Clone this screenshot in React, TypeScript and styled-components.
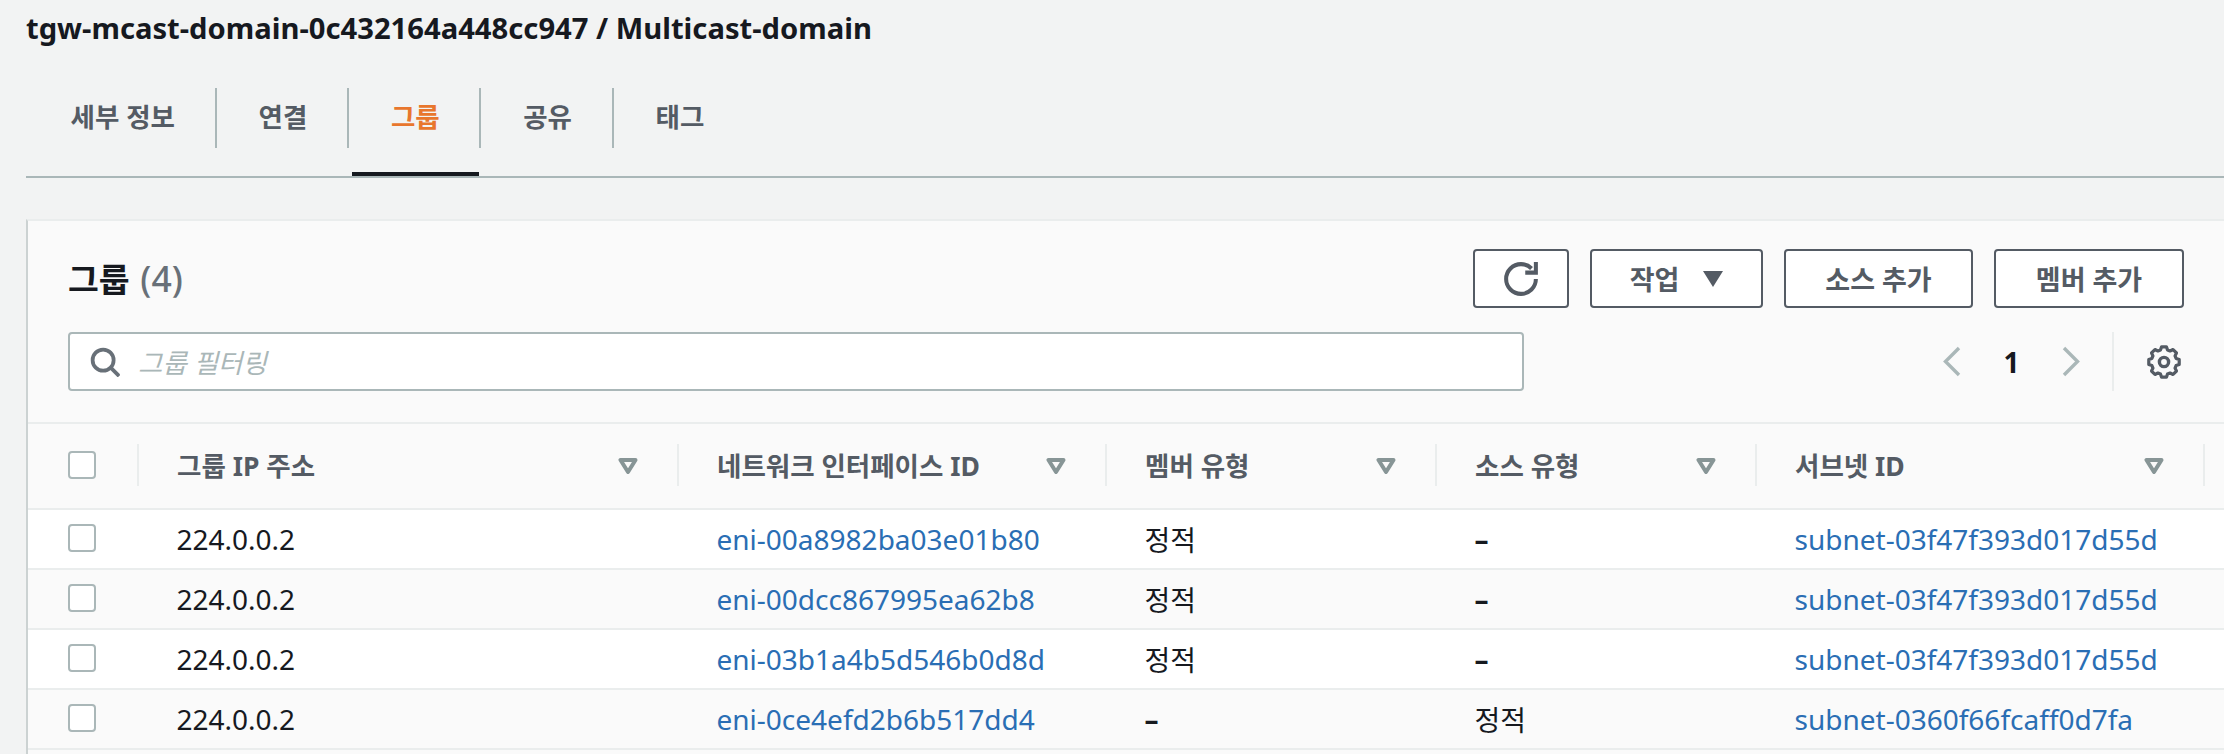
import React from "react";
import styled, { createGlobalStyle } from "styled-components";

const GRID = "109px 540px 428px 330px 320px 448px 1fr";
const FONT = `"Noto Sans", "Noto Sans CJK KR", sans-serif`;

const Global = createGlobalStyle`
  html, body { margin: 0; height: 100%; overflow: hidden; background: #f2f3f3; }
  * { box-sizing: border-box; }
  body { font-family: ${FONT}; color: #16191f; }
`;

const Page = styled.div`
  padding-left: 26px;
  height: 754px;
  overflow: hidden;
`;
const Title = styled.h1`
  margin: 0;
  height: 56px;
  font-size: 29.2px;
  font-weight: 700;
  line-height: 56px;
  color: #16191f;
  white-space: nowrap;
`;
const Tabs = styled.nav`
  display: flex;
  height: 122px;
  padding-left: 2.500px;
  border-bottom: 2px solid #aab7b8;
`;
const Tab = styled.div<{ $active?: boolean; $last?: boolean }>`
  position: relative;
  display: flex;
  align-items: center;
  height: 120px;
  padding: 0 41.600px 2px 42px;
  font-size: 26.5px;
  font-weight: 700;
  color: ${(p) => (p.$active ? "#e8762d" : "#545b64")};
  &::before {
    content: "";
    display: ${(p) => (p.$last ? "none" : "block")};
    position: absolute;
    right: 0;
    top: 32px;
    width: 2px;
    height: 60px;
    background: #aab7b8;
  }
  &::after {
    content: "";
    display: ${(p) => (p.$active ? "block" : "none")};
    position: absolute;
    left: 3px;
    right: 2px;
    bottom: 0;
    height: 4px;
    background: #16191f;
  }
`;
const Card = styled.section`
  margin: 41px 0 0 0;
  height: 540px;
  background: #fafafa;
  border-left: 2px solid #ccd2d2;
  border-top: 2px solid #eaeded;
`;
const Toolbar = styled.div`
  padding: 28px 40px 31px 40px;
  display: flex;
  flex-direction: column;
  gap: 24px;
`;
const ToolRow = styled.div`
  display: flex;
  align-items: center;
`;
const Heading = styled.h2`
  margin: 0 auto 0 0;
  font-size: 33.5px;
  line-height: 1;
  font-weight: 700;
  color: #16191f;
`;
const Count = styled.span`
  margin-left: 2px;
  font-size: 35.5px;
  font-weight: 500;
  color: #687078;
`;
const Buttons = styled.div`
  display: flex;
  gap: 21px;
`;
const Button = styled.button<{ $w: number }>`
  width: ${(p) => p.$w}px;
  height: 59px;
  display: flex;
  align-items: center;
  justify-content: center;
  gap: 24px;
  background: #fff;
  border: 2px solid #545b64;
  border-radius: 4px;
  font-family: ${FONT};
  font-size: 27px;
  font-weight: 700;
  color: #545b64;
  padding: 0;
`;
const Search = styled.div`
  width: 1456px;
  height: 59px;
  display: flex;
  align-items: center;
  gap: 18px;
  padding-left: 20px;
  background: #fff;
  border: 2px solid #aab7b8;
  border-radius: 4px;
`;
const Placeholder = styled.span`
  font-size: 26.5px;
  font-style: italic;
  color: #aab7b8;
`;
const Pager = styled.div`
  margin-left: auto;
  margin-right: 3px;
  display: flex;
  align-items: center;
  height: 59px;
`;
const PageNum = styled.span`
  width: 101px;
  text-align: center;
  font-size: 28px;
  font-weight: 700;
  color: #16191f;
`;
const PagerSep = styled.div`
  width: 2px;
  height: 59px;
  margin: 0 33px 0 32px;
  background: #eaeded;
`;
const Row = styled.div<{ $kind: "head" | "white" | "grey" }>`
  display: grid;
  grid-template-columns: ${GRID};
  align-items: center;
  height: ${(p) => (p.$kind === "head" ? 86 : 60)}px;
  border-top: 2px solid #eaeded;
  padding-bottom: 2px;
  background: ${(p) => (p.$kind === "white" ? "#fff" : "#fafafa")};
`;
const CheckCell = styled.div`
  padding-left: 40px;
  display: flex;
`;
const Check = styled.span`
  display: block;
  width: 28px;
  height: 28px;
  background: #fff;
  border: 2px solid #aab7b8;
  border-radius: 4px;
`;
const HeadCell = styled.div`
  position: relative;
  display: flex;
  align-items: center;
  justify-content: space-between;
  padding: 0 39px 2px 40px;
  font-size: 26.5px;
  font-weight: 700;
  color: #545b64;
  white-space: nowrap;
  &::before {
    content: "";
    position: absolute;
    left: 0;
    top: 50%;
    margin-top: -21px;
    width: 2px;
    height: 42px;
    background: #eaeded;
  }
`;
const EndCell = styled.div`
  position: relative;
  &::before {
    content: "";
    position: absolute;
    left: 0;
    top: -21px;
    width: 2px;
    height: 42px;
    background: #eaeded;
  }
`;
const Cell = styled.div<{ $dash?: boolean }>`
  padding: 1px 0 0 39.5px;
  font-size: 28px;
  font-weight: ${(p) => (p.$dash ? 700 : 400)};
  color: #16191f;
  white-space: nowrap;
`;
const Link = styled.a`
  color: #2a6eb4;
  text-decoration: none;
`;
const FilterMark = styled.svg`
  flex: none;
  margin-top: 3px;
`;

const gearPath = (() => {
  const pts: string[] = [];
  const teeth = 8;
  for (let i = 0; i < teeth; i++) {
    const a = (i * 2 * Math.PI) / teeth;
    const step = (2 * Math.PI) / teeth;
    const seq: [number, number][] = [
      [12.6, a - step * 0.36],
      [15.4, a - step * 0.2],
      [15.4, a + step * 0.2],
      [12.6, a + step * 0.36],
    ];
    for (const [r, t] of seq) {
      pts.push(`${(17 + r * Math.sin(t)).toFixed(2)} ${(17 - r * Math.cos(t)).toFixed(2)}`);
    }
  }
  return `M${pts.join("L")}Z`;
})();

const GearIcon = () => (
  <svg width="34" height="34" viewBox="0 0 34 34" fill="none" stroke="#545b64" strokeWidth="3.2" strokeLinejoin="round">
    <path d={gearPath} />
    <circle cx="17" cy="17" r="4.6" strokeWidth="3.4" />
  </svg>
);
const FilterIcon = () => (
  <FilterMark width="20" height="16" viewBox="0 0 20 16" fill="none" stroke="#879596" strokeWidth="4" strokeLinejoin="round">
    <path d="M2.500 2h15L10 14z" />
  </FilterMark>
);
const CaretIcon = () => (
  <svg width="20" height="16" viewBox="0 0 20 16" fill="#545b64">
    <path d="M0 0h20L10 16z" />
  </svg>
);
const RefreshIcon = () => (
  <svg width="34" height="34" viewBox="0 0 16 16" fill="none" stroke="#545b64" strokeWidth="1.9">
    <path d="M10 5h5V0" />
    <path d="M15 8a7 7 0 0 1-7 7 7 7 0 0 1-7-7 7 7 0 0 1 7-7c1.93 0 3.68.78 4.95 2.05" />
  </svg>
);
const SearchIcon = () => (
  <svg width="30" height="30" viewBox="0 0 16 16" fill="none" stroke="#687078" strokeWidth="2">
    <circle cx="7" cy="7" r="5.6" />
    <path d="M15.5 15.5l-4.6-4.6" />
  </svg>
);
const Chevron = ({ right }: { right?: boolean }) => (
  <svg width="18" height="31" viewBox="0 0 18 31" fill="none" stroke="#aab7b8" strokeWidth="3.4">
    <path d={right ? "M2 2l13.500 13.500L2 29" : "M16 2L2.500 15.500 16 29"} />
  </svg>
);

type R = { ip: string; eni: string; member: string; source: string; subnet: string };
const rows: R[] = [
  { ip: "224.0.0.2", eni: "eni-00a8982ba03e01b80", member: "정적", source: "–", subnet: "subnet-03f47f393d017d55d" },
  { ip: "224.0.0.2", eni: "eni-00dcc867995ea62b8", member: "정적", source: "–", subnet: "subnet-03f47f393d017d55d" },
  { ip: "224.0.0.2", eni: "eni-03b1a4b5d546b0d8d", member: "정적", source: "–", subnet: "subnet-03f47f393d017d55d" },
  { ip: "224.0.0.2", eni: "eni-0ce4efd2b6b517dd4", member: "–", source: "정적", subnet: "subnet-0360f66fcaff0d7fa" },
];
const columns = ["그룹 IP 주소", "네트워크 인터페이스 ID", "멤버 유형", "소스 유형", "서브넷 ID"];

export default function App() {
  return (
    <Page>
      <Global />
      <Title>tgw-mcast-domain-0c432164a448cc947 / Multicast-domain</Title>
      <Tabs>
        <Tab>세부 정보</Tab>
        <Tab>연결</Tab>
        <Tab $active>그룹</Tab>
        <Tab>공유</Tab>
        <Tab $last>태그</Tab>
      </Tabs>
      <Card>
        <Toolbar>
          <ToolRow>
            <Heading>
              그룹 <Count>(4)</Count>
            </Heading>
            <Buttons>
              <Button $w={96}><RefreshIcon /></Button>
              <Button $w={173}>작업<CaretIcon /></Button>
              <Button $w={189}>소스 추가</Button>
              <Button $w={190}>멤버 추가</Button>
            </Buttons>
          </ToolRow>
          <ToolRow>
            <Search>
              <SearchIcon />
              <Placeholder>그룹 필터링</Placeholder>
            </Search>
            <Pager>
              <Chevron />
              <PageNum>1</PageNum>
              <Chevron right />
              <PagerSep />
              <GearIcon />
            </Pager>
          </ToolRow>
        </Toolbar>
        <Row $kind="head">
          <CheckCell><Check /></CheckCell>
          {columns.map((c) => (
            <HeadCell key={c}>
              {c}
              <FilterIcon />
            </HeadCell>
          ))}
          <EndCell />
        </Row>
        {rows.map((r, i) => (
          <Row key={r.eni} $kind={i % 2 === 0 ? "white" : "grey"}>
            <CheckCell><Check /></CheckCell>
            <Cell>{r.ip}</Cell>
            <Cell><Link>{r.eni}</Link></Cell>
            <Cell $dash={r.member === "–"}>{r.member}</Cell>
            <Cell $dash={r.source === "–"}>{r.source}</Cell>
            <Cell><Link>{r.subnet}</Link></Cell>
          </Row>
        ))}
        <Row $kind="grey" />
      </Card>
    </Page>
  );
}
